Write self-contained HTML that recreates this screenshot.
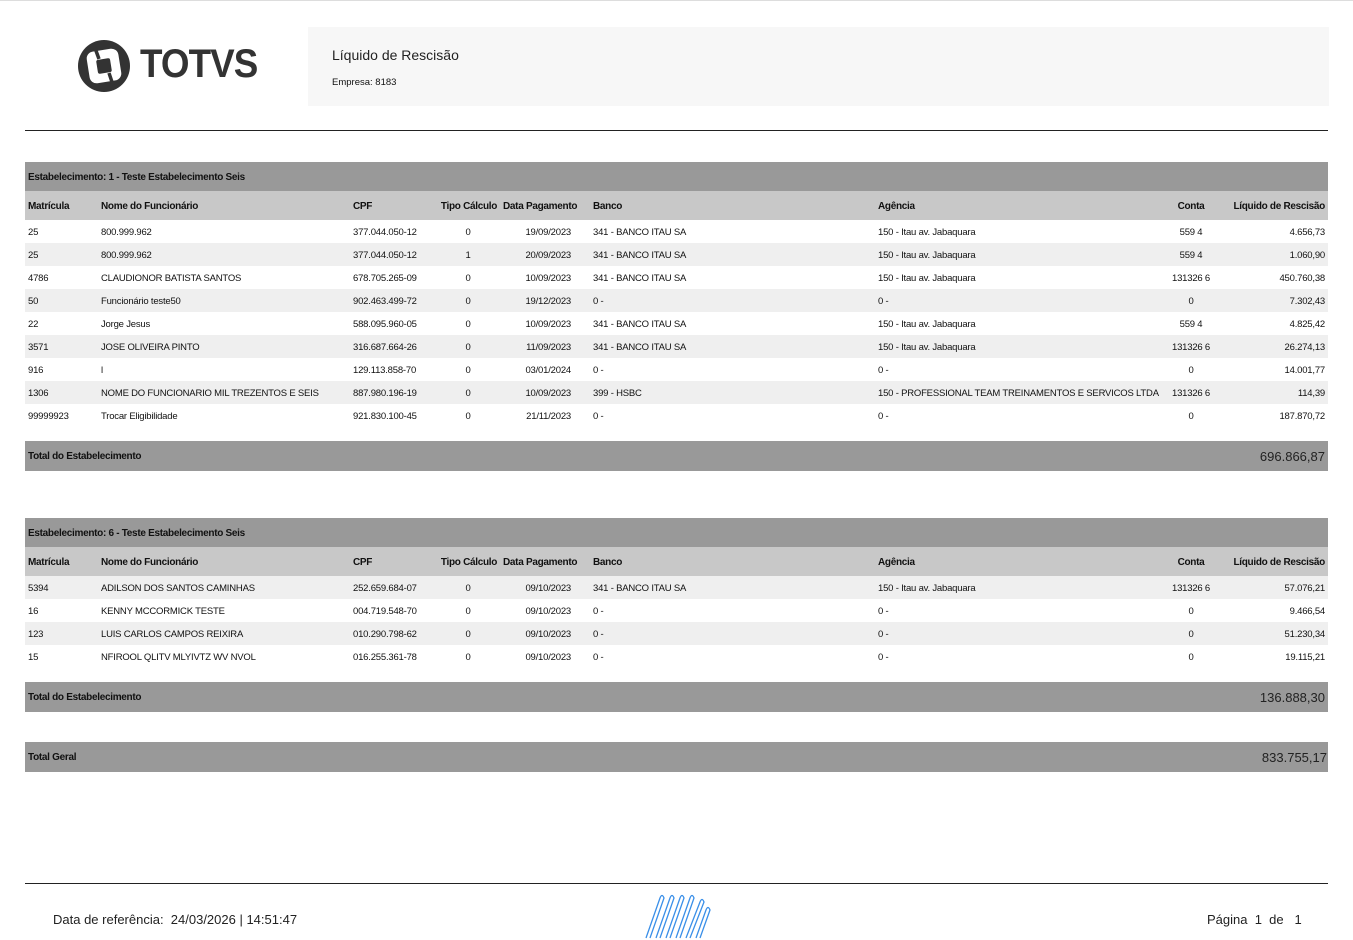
<!DOCTYPE html>
<html><head><meta charset="utf-8"><style>
body{margin:0;width:1353px;height:940px;background:#fff;position:relative;font-family:"Liberation Sans",sans-serif;color:#111;overflow:hidden}
.a{position:absolute}
.bar{position:absolute;left:25px;width:1303px;background:#999;font-size:10px;font-weight:bold;letter-spacing:-0.3px}
.hd{position:absolute;left:25px;width:1303px;background:#c8c8c8;font-size:10px;font-weight:bold;letter-spacing:-0.3px}
.r{position:absolute;left:25px;width:1303px;height:23px;font-size:9.5px;letter-spacing:-0.2px}
.r.g{background:#efefef}
.r span,.hd span{position:absolute;top:50%;transform:translateY(-45%);white-space:nowrap}
.c1{left:3px}.c2{left:76px}.c3{left:328px}.c4{left:413px;width:60px;text-align:center}
.c5{left:476px;width:70px;text-align:right}.c6{left:568px}.c7{left:853px}.c8{left:1136px;width:60px;text-align:center}.c9{right:3px;text-align:right}
.hd .c4{width:60px}
</style></head><body>
<div class="a" style="left:0;top:0;width:1353px;height:1px;background:#ddd"></div>
<svg class="a" style="left:78px;top:40px" width="54" height="54" viewBox="0 0 54 54">
<circle cx="26" cy="26" r="26" fill="#333"/>
<g transform="rotate(-9 26 26)">
<rect x="10" y="10" width="32" height="32" rx="7" fill="#fff"/>
<rect x="19" y="19" width="14" height="14" rx="2" fill="#333"/>
</g>
<path d="M17 8 L21 19" stroke="#333" stroke-width="3.5"/>
<path d="M31 33 L35 45" stroke="#333" stroke-width="3.5"/>
</svg>
<div class="a" style="left:140px;top:42px;font-size:40px;font-weight:bold;color:#333;letter-spacing:-1px;transform:scaleX(0.92);transform-origin:left">TOTVS</div>
<div class="a" style="left:308px;top:27px;width:1021px;height:79px;background:#f7f7f7"></div>
<div class="a" style="left:332px;top:47px;font-size:14px;color:#222">Líquido de Rescisão</div>
<div class="a" style="left:332px;top:77px;font-size:9.5px">Empresa: 8183</div>
<div class="a" style="left:25px;top:130px;width:1303px;height:1px;background:#222"></div>

<div class="bar" style="top:162px;height:29px;line-height:31px;padding-left:3px;box-sizing:border-box">Estabelecimento: 1 - Teste Estabelecimento Seis</div>
<div class="hd" style="top:191px;height:29px"><span class="c1">Matrícula</span><span class="c2">Nome do Funcionário</span><span class="c3">CPF</span><span class="c4" style="left:413px;width:62px">Tipo Cálculo</span><span class="c6" style="left:478px">Data Pagamento</span><span class="c6">Banco</span><span class="c7">Agência</span><span class="c8">Conta</span><span class="c9">Líquido de Rescisão</span></div>
<div class="r" style="top:220px"><span class="c1">25</span><span class="c2">800.999.962</span><span class="c3">377.044.050-12</span><span class="c4">0</span><span class="c5">19/09/2023</span><span class="c6">341 - BANCO ITAU SA</span><span class="c7">150 - Itau av. Jabaquara</span><span class="c8">559 4</span><span class="c9">4.656,73</span></div>
<div class="r g" style="top:243px"><span class="c1">25</span><span class="c2">800.999.962</span><span class="c3">377.044.050-12</span><span class="c4">1</span><span class="c5">20/09/2023</span><span class="c6">341 - BANCO ITAU SA</span><span class="c7">150 - Itau av. Jabaquara</span><span class="c8">559 4</span><span class="c9">1.060,90</span></div>
<div class="r" style="top:266px"><span class="c1">4786</span><span class="c2">CLAUDIONOR BATISTA SANTOS</span><span class="c3">678.705.265-09</span><span class="c4">0</span><span class="c5">10/09/2023</span><span class="c6">341 - BANCO ITAU SA</span><span class="c7">150 - Itau av. Jabaquara</span><span class="c8">131326 6</span><span class="c9">450.760,38</span></div>
<div class="r g" style="top:289px"><span class="c1">50</span><span class="c2">Funcionário teste50</span><span class="c3">902.463.499-72</span><span class="c4">0</span><span class="c5">19/12/2023</span><span class="c6">0 -</span><span class="c7">0 -</span><span class="c8">0</span><span class="c9">7.302,43</span></div>
<div class="r" style="top:312px"><span class="c1">22</span><span class="c2">Jorge Jesus</span><span class="c3">588.095.960-05</span><span class="c4">0</span><span class="c5">10/09/2023</span><span class="c6">341 - BANCO ITAU SA</span><span class="c7">150 - Itau av. Jabaquara</span><span class="c8">559 4</span><span class="c9">4.825,42</span></div>
<div class="r g" style="top:335px"><span class="c1">3571</span><span class="c2">JOSE OLIVEIRA PINTO</span><span class="c3">316.687.664-26</span><span class="c4">0</span><span class="c5">11/09/2023</span><span class="c6">341 - BANCO ITAU SA</span><span class="c7">150 - Itau av. Jabaquara</span><span class="c8">131326 6</span><span class="c9">26.274,13</span></div>
<div class="r" style="top:358px"><span class="c1">916</span><span class="c2">l</span><span class="c3">129.113.858-70</span><span class="c4">0</span><span class="c5">03/01/2024</span><span class="c6">0 -</span><span class="c7">0 -</span><span class="c8">0</span><span class="c9">14.001,77</span></div>
<div class="r g" style="top:381px"><span class="c1">1306</span><span class="c2">NOME DO FUNCIONARIO MIL TREZENTOS E SEIS</span><span class="c3">887.980.196-19</span><span class="c4">0</span><span class="c5">10/09/2023</span><span class="c6">399 - HSBC</span><span class="c7">150 - PROFESSIONAL TEAM TREINAMENTOS E SERVICOS LTDA</span><span class="c8">131326 6</span><span class="c9">114,39</span></div>
<div class="r" style="top:404px"><span class="c1">99999923</span><span class="c2">Trocar Eligibilidade</span><span class="c3">921.830.100-45</span><span class="c4">0</span><span class="c5">21/11/2023</span><span class="c6">0 -</span><span class="c7">0 -</span><span class="c8">0</span><span class="c9">187.870,72</span></div>
<div class="bar" style="top:441px;height:30px;line-height:31px;padding-left:3px;box-sizing:border-box">Total do Estabelecimento<span style="position:absolute;right:3px;font-weight:normal;font-size:13px;letter-spacing:0;color:#222">696.866,87</span></div>

<div class="bar" style="top:518px;height:29px;line-height:31px;padding-left:3px;box-sizing:border-box">Estabelecimento: 6 - Teste Estabelecimento Seis</div>
<div class="hd" style="top:547px;height:29px"><span class="c1">Matrícula</span><span class="c2">Nome do Funcionário</span><span class="c3">CPF</span><span class="c4" style="left:413px;width:62px">Tipo Cálculo</span><span class="c6" style="left:478px">Data Pagamento</span><span class="c6">Banco</span><span class="c7">Agência</span><span class="c8">Conta</span><span class="c9">Líquido de Rescisão</span></div>
<div class="r g" style="top:576px"><span class="c1">5394</span><span class="c2">ADILSON DOS SANTOS CAMINHAS</span><span class="c3">252.659.684-07</span><span class="c4">0</span><span class="c5">09/10/2023</span><span class="c6">341 - BANCO ITAU SA</span><span class="c7">150 - Itau av. Jabaquara</span><span class="c8">131326 6</span><span class="c9">57.076,21</span></div>
<div class="r" style="top:599px"><span class="c1">16</span><span class="c2">KENNY MCCORMICK TESTE</span><span class="c3">004.719.548-70</span><span class="c4">0</span><span class="c5">09/10/2023</span><span class="c6">0 -</span><span class="c7">0 -</span><span class="c8">0</span><span class="c9">9.466,54</span></div>
<div class="r g" style="top:622px"><span class="c1">123</span><span class="c2">LUIS CARLOS CAMPOS REIXIRA</span><span class="c3">010.290.798-62</span><span class="c4">0</span><span class="c5">09/10/2023</span><span class="c6">0 -</span><span class="c7">0 -</span><span class="c8">0</span><span class="c9">51.230,34</span></div>
<div class="r" style="top:645px"><span class="c1">15</span><span class="c2">NFIROOL QLITV MLYIVTZ WV NVOL</span><span class="c3">016.255.361-78</span><span class="c4">0</span><span class="c5">09/10/2023</span><span class="c6">0 -</span><span class="c7">0 -</span><span class="c8">0</span><span class="c9">19.115,21</span></div>
<div class="bar" style="top:682px;height:30px;line-height:31px;padding-left:3px;box-sizing:border-box">Total do Estabelecimento<span style="position:absolute;right:3px;font-weight:normal;font-size:13px;letter-spacing:0;color:#222">136.888,30</span></div>
<div class="bar" style="top:742px;height:30px;line-height:31px;padding-left:3px;box-sizing:border-box">Total Geral<span style="position:absolute;right:1px;font-weight:normal;font-size:13px;letter-spacing:0;color:#222">833.755,17</span></div>

<div class="a" style="left:25px;top:883px;width:1303px;height:1px;background:#222"></div>
<div class="a" style="left:53px;top:912px;font-size:13px;color:#222">Data de referência:&nbsp; 24/03/2026 | 14:51:47</div>
<svg class="a" style="left:644px;top:890px" width="68" height="50" viewBox="0 0 68 50" fill="none" stroke="#3a8fe8" stroke-width="1.3">
<path d="M2 48 L16 8 Q18 3 20 8 L6 48"/>
<path d="M12 48 L26 8 Q28 3 30 8 L16 48"/>
<path d="M22 48 L36 8 Q38 3 40 8 L26 48"/>
<path d="M32 48 L46 8 Q48 3 50 8 L36 48"/>
<path d="M42 48 L56 12 Q58 7 60 12 L46 48"/>
<path d="M52 48 L62 20 Q64 15 66 20 L56 48"/>
</svg>
<div class="a" style="left:1207px;top:912px;font-size:13px;color:#222">Página&nbsp; 1&nbsp; de&nbsp;&nbsp; 1</div>
</body></html>
